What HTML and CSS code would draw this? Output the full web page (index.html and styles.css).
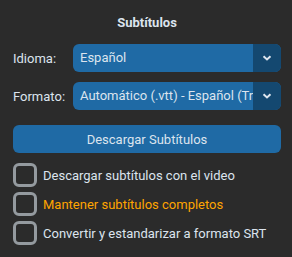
FILE: index.html
```html
<!DOCTYPE html>
<html lang="es">
<head>
    <meta charset="UTF-8">
    <title>Subtítulos</title>
    <link rel="stylesheet" href="styles.css">
</head>
<body>
    <div class="panel">
        <h2 class="title">Subtítulos</h2>

        <div class="row">
            <span class="label">Idioma:</span>
            <div class="combo">
                <span class="combo-text">Español</span>
                <span class="combo-btn">
                    <svg width="10" height="6" viewBox="0 0 10 6"><path d="M1.5 1.2 L5 4.5 L8.5 1.2" fill="none" stroke="#dce4ee" stroke-width="2"/></svg>
                </span>
            </div>
        </div>

        <div class="row">
            <span class="label">Formato:</span>
            <div class="combo">
                <span class="combo-text">Automático (.vtt) - Español (Traducido)</span>
                <span class="combo-btn">
                    <svg width="10" height="6" viewBox="0 0 10 6"><path d="M1.5 1.2 L5 4.5 L8.5 1.2" fill="none" stroke="#dce4ee" stroke-width="2"/></svg>
                </span>
            </div>
        </div>

        <button class="download">Descargar Subtítulos</button>

        <div class="checks">
            <label class="check"><span class="box"></span>Descargar subtítulos con el video</label>
            <label class="check warn"><span class="box"></span>Mantener subtítulos completos</label>
            <label class="check"><span class="box"></span>Convertir y estandarizar a formato SRT</label>
        </div>
    </div>
</body>
</html>
```

FILE: styles.css
```css
body {
    margin: 0;
    background: #2b2b2b;
    font-family: Roboto, "Liberation Sans", sans-serif;
    color: #dce4ee;
}

.panel {
    padding: 15px 11px 0 13px;
    display: flex;
    flex-direction: column;
}

.title {
    margin: 0 0 13px;
    font-size: 13px;
    font-weight: bold;
    text-align: center;
    line-height: 16px;
}

.row {
    display: flex;
    align-items: center;
    margin-bottom: 10px;
    font-size: 13px;
}

.label {
    width: 60px;
}

.combo {
    flex: 1;
    display: flex;
    height: 28px;
    background: #1f6aa5;
    border-radius: 6px;
    overflow: hidden;
}

.combo-text {
    flex: 1;
    padding-left: 7px;
    line-height: 28px;
    white-space: nowrap;
    overflow: hidden;
}

.combo-btn {
    width: 28px;
    background: #144870;
    display: flex;
    align-items: center;
    justify-content: center;
}

.download {
    margin-top: 5px;
    height: 28px;
    border: none;
    border-radius: 6px;
    background: #1f6aa5;
    color: #dce4ee;
    font-family: Roboto, "Liberation Sans", sans-serif;
    font-size: 13px;
    padding: 0;
}

.checks {
    margin-top: 10px;
    display: flex;
    flex-direction: column;
    gap: 5px;
}

.check {
    display: flex;
    align-items: center;
    font-size: 13px;
    height: 24px;
}

.box {
    width: 18px;
    height: 18px;
    border: 3px solid #949a9f;
    border-radius: 6px;
    margin-right: 6px;
}

.warn {
    color: #ffa500;
}
```
